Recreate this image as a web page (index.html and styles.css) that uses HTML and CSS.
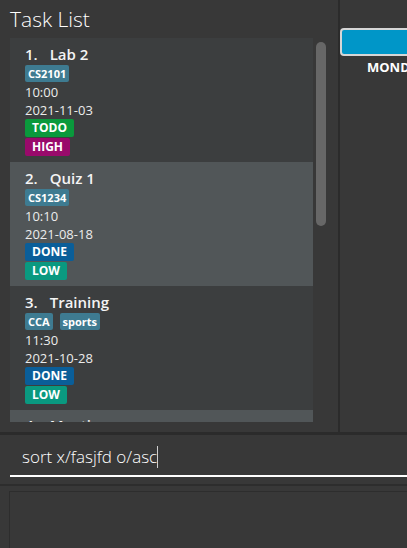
FILE: index.html
```html
<!DOCTYPE html>
<html>
<head>
<meta charset="utf-8">
<link rel="stylesheet" href="styles.css">
</head>
<body>
<div class="app">
  <div class="top">
    <div class="left">
      <div class="title">Task List</div>
      <div class="listwrap">
        <div class="list">
          <div class="card even">
            <div class="name"><span class="idx">1.</span><span>Lab 2</span></div>
            <div class="tags"><span class="tag">CS2101</span></div>
            <div class="line">10:00</div>
            <div class="line">2021-11-03</div>
            <div class="badges">
              <span class="badge todo">TODO</span>
              <span class="badge high">HIGH</span>
            </div>
          </div>
          <div class="card odd">
            <div class="name"><span class="idx">2.</span><span>Quiz 1</span></div>
            <div class="tags"><span class="tag">CS1234</span></div>
            <div class="line">10:10</div>
            <div class="line">2021-08-18</div>
            <div class="badges">
              <span class="badge done">DONE</span>
              <span class="badge low">LOW</span>
            </div>
          </div>
          <div class="card even">
            <div class="name"><span class="idx">3.</span><span>Training</span></div>
            <div class="tags"><span class="tag">CCA</span><span class="tag">sports</span></div>
            <div class="line">11:30</div>
            <div class="line">2021-10-28</div>
            <div class="badges">
              <span class="badge done">DONE</span>
              <span class="badge low">LOW</span>
            </div>
          </div>
          <div class="card odd last">
            <div class="name"><span class="idx">4.</span><span>Meeting</span></div>
          </div>
        </div>
        <div class="scroll"><div class="thumb"></div></div>
      </div>
    </div>
    <div class="vdiv"></div>
    <div class="right">
      <div class="daybtn"></div>
      <div class="daylabel">MONDAY</div>
    </div>
  </div>
  <div class="hdiv"></div>
  <div class="command">
    <div class="cmdfield"><span class="cmdtext">sort x/fasjfd o/asc</span><span class="caret"></span></div>
  </div>
  <div class="hdiv2"></div>
  <div class="result">
    <div class="resultbox"></div>
  </div>
</div>
</body>
</html>
```

FILE: styles.css
```css
html, body {
  margin: 0;
  padding: 0;
}
body {
  background: #383838;
  width: 407px;
  height: 548px;
  overflow: hidden;
  font-family: "Open Sans", "Liberation Sans", sans-serif;
  color: #ffffff;
}
.app {
  display: flex;
  flex-direction: column;
  height: 548px;
}
.top {
  display: flex;
  height: 432px;
}
.left {
  width: 338px;
  padding-left: 10px;
  box-sizing: border-box;
}
.title {
  height: 38px;
  font-size: 21px;
  font-weight: 300;
  line-height: 38px;
}
.listwrap {
  display: flex;
  height: 384px;
}
.list {
  width: 303px;
  height: 384px;
  overflow: hidden;
}
.card {
  height: 124px;
  padding: 6px 0 0 15px;
  box-sizing: border-box;
}
.card.last {
  padding-top: 5px;
}
.card.even { background: #3c3e3f; }
.card.odd { background: #515658; }
.name {
  display: flex;
  gap: 12px;
  font-size: 15px;
  font-weight: 600;
  line-height: 20px;
  height: 20px;
  color: #f4f4f4;
}
.tags {
  display: flex;
  gap: 7px;
  margin-top: 1px;
  height: 18px;
}
.tag {
  background: #3e7b91;
  color: #fff;
  font-size: 11px;
  font-weight: 700;
  line-height: 17px;
  height: 17px;
  padding: 0 3px;
  border-radius: 2px;
}
.line {
  font-size: 13px;
  line-height: 18px;
  height: 18px;
  color: #ececec;
}
.badges {
  display: flex;
  flex-direction: column;
  align-items: flex-start;
  gap: 1px;
}
.badge {
  font-size: 12px;
  font-weight: 700;
  line-height: 18px;
  height: 18px;
  padding: 0 7px;
  border-radius: 2px;
  color: #fff;
}
.todo { background: #0a993c; }
.high { background: #990a6b; }
.done { background: #0a5e99; }
.low { background: #0a9980; }
.scroll {
  width: 25px;
  padding-left: 3px;
  box-sizing: border-box;
}
.thumb {
  margin-top: 4px;
  width: 10px;
  height: 184px;
  border-radius: 5px;
  background: #676767;
}
.vdiv {
  width: 2px;
  background: #2b2b2b;
}
.right {
  flex: 1;
  padding-top: 28px;
  overflow: hidden;
}
.daybtn {
  width: 100px;
  height: 28px;
  box-sizing: border-box;
  border: 2px solid #d6d6d6;
  border-radius: 4px;
  background: #0096c8;
}
.daylabel {
  margin-left: 27px;
  font-size: 13px;
  font-weight: 700;
  line-height: 20px;
  margin-top: 1px;
  white-space: nowrap;
}
.hdiv {
  height: 3px;
  background: #2b2b2b;
}
.command {
  height: 49px;
  padding-left: 10px;
}
.cmdfield {
  height: 42px;
  border-bottom: 2px solid #ffffff;
  padding-left: 12px;
  display: flex;
  align-items: flex-end;
  box-sizing: border-box;
  padding-bottom: 6px;
}
.cmdtext {
  font-size: 17px;
  font-weight: 300;
  line-height: 24px;
  white-space: pre;
}
.caret {
  display: inline-block;
  width: 1px;
  height: 22px;
  background: #cfcfcf;
  margin-bottom: 1px;
}
.hdiv2 {
  height: 2px;
  background: #2d2d2d;
}
.result {
  flex: 1;
  padding: 5px 0 0 9px;
}
.resultbox {
  height: 100%;
  border-top: 1px solid #2d2d2d;
  border-left: 1px solid #2d2d2d;
}
```
